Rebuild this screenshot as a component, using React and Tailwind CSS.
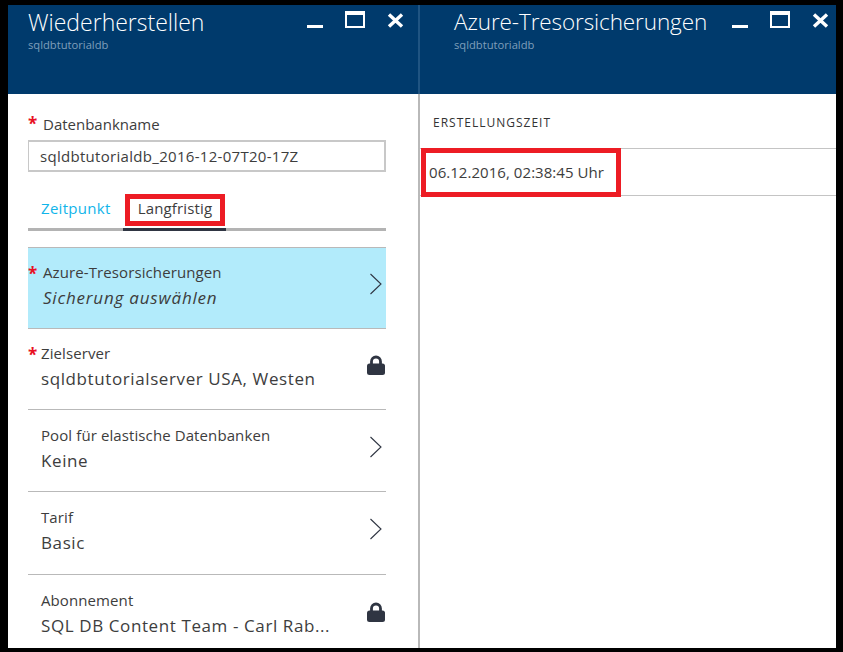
const font = { fontFamily: '"Open Sans", "Noto Sans", sans-serif' };

function WinIcons() {
  return (
    <svg width="120" height="30" viewBox="0 0 120 30" className="block">
      <rect x="17" y="20" width="16" height="3" fill="#fff" />
      <rect x="56" y="7" width="18" height="15" fill="none" stroke="#fff" strokeWidth="2" />
      <rect x="56" y="6" width="18" height="4" fill="#fff" />
      <path d="M99 9.5 L112 21.5 M112 9.5 L99 21.5" stroke="#fff" strokeWidth="3.4" fill="none" />
    </svg>
  );
}

function Chevron() {
  return (
    <svg width="14" height="22" viewBox="0 0 14 22" className="block">
      <path d="M1.5 1 L12 11 L1.5 21" fill="none" stroke="#2f3542" strokeWidth="1.1" />
    </svg>
  );
}

function Lock() {
  return (
    <svg width="18" height="20" viewBox="0 0 18 20" className="block">
      <path d="M4.5 10 V6.5 A4.5 4.5 0 0 1 13.5 6.5 V10" fill="none" stroke="#2f3542" strokeWidth="2.8" />
      <rect x="0" y="8.5" width="18" height="11.5" rx="2.5" fill="#2f3542" />
    </svg>
  );
}

function Header({ title, pad, size }) {
  return (
    <div className={`h-[89px] bg-[#003a6c] flex justify-between ${pad}`}>
      <div>
        <div className={`${size} leading-[30px] pt-[2px] text-white font-light`}>{title}</div>
        <div className="text-[11.2px] leading-[16px] text-[#7f9fbb]">sqldbtutorialdb</div>
      </div>
    </div>
  );
}

function Row({ label, value, req, icon, h, highlight, italic }) {
  return (
    <div className={`relative flex items-center justify-between pr-[1px] border-t border-[#b9b9b9] ${highlight ? "pl-[15px] bg-[#b2ebfb]" : "pl-[13px]"} ${h}`}>
      {req && <span className="absolute left-0 top-[17px] text-[#e81123] font-bold text-[17px] leading-[17px]">*</span>}
      <div className="pb-[4px]">
        <div className="text-[15px] tracking-[0.1px] leading-[20px] text-[#3d3d3d]">{label}</div>
        <div className={`text-[17px] leading-[24px] mt-[4px] text-[#3d3d3d] whitespace-nowrap ${italic ? "italic tracking-[0.8px]" : "tracking-[0.6px]"}`}>{value}</div>
      </div>
      <div className="w-[18px] flex justify-center mb-[8px]">{icon}</div>
    </div>
  );
}

export default function App() {
  return (
    <div style={font} className="w-[843px] h-[652px] bg-black pt-[5px] pl-[8px] pr-[7px] pb-[4px] flex overflow-hidden">
      <div className="w-[410px] h-full bg-white relative overflow-hidden">
        <Header title="Wiederherstellen" pad="pl-[20px]" size="text-[23px]" />
        <div className="absolute left-[282px] top-0"><WinIcons /></div>
        <div className="pl-[20px] pr-[32px] pt-[20px]">
          <div className="flex items-start h-[26px]">
            <span className="text-[#e81123] font-bold text-[17px] leading-[17px] w-[15px] pt-[1px]">*</span>
            <span className="text-[15px] leading-[20px] text-[#3d3d3d]">Datenbankname</span>
          </div>
          <div className="h-[32px] border-2 border-l-[1px] border-[#c8c8c8] pl-[11px] text-[15px] tracking-[0.3px] leading-[28px] text-[#3d3d3d] whitespace-nowrap">
            sqldbtutorialdb_2016-12-07T20-17Z
          </div>
          <div className="relative mt-[22px] h-[37px] border-b-[3px] border-[#b3b3b3]">
            <div className="flex items-start">
              <span className="pl-[13px] pt-[4px] w-[97px] text-[15px] tracking-[0.3px] leading-[21px] text-[#11b5ea]">Zeitpunkt</span>
              <span className="w-[100px] h-[32px] border-[5px] border-[#ed1c24] text-center text-[15px] tracking-[0.15px] leading-[19px] text-[#3d3d3d]">Langfristig</span>
            </div>
            <div className="absolute left-[95px] w-[103px] bottom-[-3px] h-[3px] bg-[#2f3542]" />
          </div>
          <div className="mt-[16px]">
            <Row h="h-[81px]" label="Azure-Tresorsicherungen" value="Sicherung auswählen" italic req highlight icon={<Chevron />} />
            <Row h="h-[81px]" label="Zielserver" value="sqldbtutorialserver USA, Westen" req icon={<Lock />} />
            <Row h="h-[82px]" label="Pool für elastische Datenbanken" value="Keine" icon={<Chevron />} />
            <Row h="h-[83px]" label="Tarif" value="Basic" icon={<Chevron />} />
            <Row h="h-[83px]" label="Abonnement" value="SQL DB Content Team - Carl Rab..." icon={<Lock />} />
          </div>
        </div>
      </div>
      <div className="w-[2px] h-full flex flex-col">
        <div className="h-[89px] bg-[#1f5482]" />
        <div className="flex-1 bg-[#b9b9b9]" />
      </div>
      <div className="flex-1 h-full bg-white relative overflow-hidden">
        <Header title="Azure-Tresorsicherungen" pad="pl-[34px]" size="text-[22.5px] tracking-[-0.1px]" />
        <div className="absolute left-[295px] top-0"><WinIcons /></div>
        <div className="pl-[13px] pt-[21px] h-[54px] text-[12px] leading-[16px] font-medium tracking-[1px] text-[#333333]">ERSTELLUNGSZEIT</div>
        <div className="h-[48px] border-y border-[#c4c4c4] relative">
          <div className="absolute left-[1px] top-[-1px] w-[200px] h-[49px] border-[5px] border-[#ed1c24] pl-[3px] text-[15px] tracking-[0.05px] leading-[39px] text-[#3d3d3d] whitespace-nowrap">
            06.12.2016, 02:38:45 Uhr
          </div>
        </div>
      </div>
    </div>
  );
}
